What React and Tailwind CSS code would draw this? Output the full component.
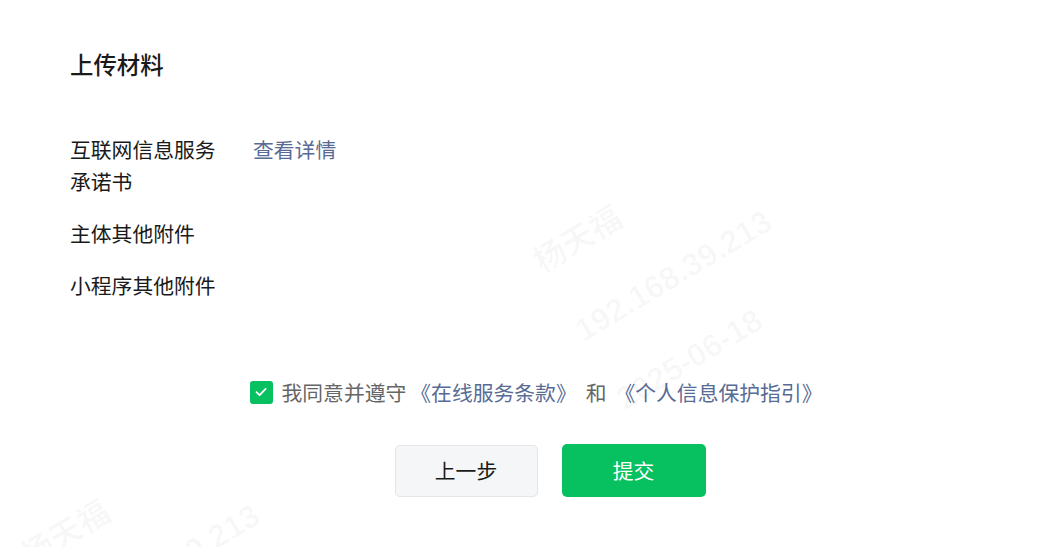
import React, { useState } from "react";

const rows = [
  { label: "互联网信息服务承诺书", value: "查看详情" },
  { label: "主体其他附件", value: "" },
  { label: "小程序其他附件", value: "" },
];

function Watermark({ className }) {
  return (
    <div className={`pointer-events-none absolute select-none origin-top-left -rotate-[31deg] text-[32px] font-bold leading-[80px] text-black/[0.03] whitespace-nowrap font-['Liberation_Sans','Noto_Sans_CJK_SC',sans-serif] ${className}`}>
      <div>杨天福</div>
      <div>192.168.39.213</div>
      <div>2025-06-18</div>
    </div>
  );
}

export default function App() {
  const [agreed, setAgreed] = useState(true);

  return (
    <div className="relative min-h-screen overflow-hidden bg-white text-[20.8px] text-[#1a1a1a] font-['Noto_Sans_CJK_SC','Liberation_Sans',sans-serif]">
      <div className="px-[70px] pt-[48px]">
        <h2 className="text-[23.4px] leading-[32px] font-medium">上传材料</h2>

        {/* 材料列表 */}
        <div className="mt-[53px] flex flex-col gap-[20px]">
          {rows.map(({ label, value }) => (
            <div key={label} className="flex leading-[32px]">
              <div className="w-[157px] mr-[26px] shrink-0">{label}</div>
              {value && <a className="text-[#576b95] cursor-pointer">{value}</a>}
            </div>
          ))}
        </div>
      </div>

      {/* 协议 */}
      <div className="mt-[75px] flex justify-center pl-[30px] leading-[32px]">
        <label className="flex items-center cursor-pointer">
          <span
            onClick={() => setAgreed(!agreed)}
            className={`w-[23px] h-[23px] rounded-[3px] flex items-center justify-center mr-[9px] ${agreed ? "bg-[#07c160]" : "border border-gray-300 bg-white"}`}
          >
            {agreed && (
              <svg width="14" height="14" viewBox="0 0 14 14" fill="none">
                <path d="M2.5 7.2 5.6 10.2 11.6 3.8" stroke="white" strokeWidth="1.8" strokeLinecap="round" strokeLinejoin="round" />
              </svg>
            )}
          </span>
          <span className="text-[#666]">我同意并遵守</span>
          <a className="ml-[4px] text-[#576b95]">《在线服务条款》</a>
          <span className="ml-[9px] mr-[8px] text-[#666]">和</span>
          <a className="text-[#576b95]">《个人信息保护指引》</a>
        </label>
      </div>

      {/* 按钮 */}
      <div className="mt-[37px] flex justify-center gap-[24px] pl-[58px]">
        <button className="w-[143px] h-[52px] rounded-[5px] border border-[#e3e5e8] bg-[#f5f6f8] text-[#1a1a1a]">
          上一步
        </button>
        <button className="w-[144px] h-[53px] -mt-px rounded-[5px] bg-[#07c160] text-white">
          提交
        </button>
      </div>

      <Watermark className="left-[516px] top-[230px]" />
      <Watermark className="left-[4px] top-[524px]" />
    </div>
  );
}
